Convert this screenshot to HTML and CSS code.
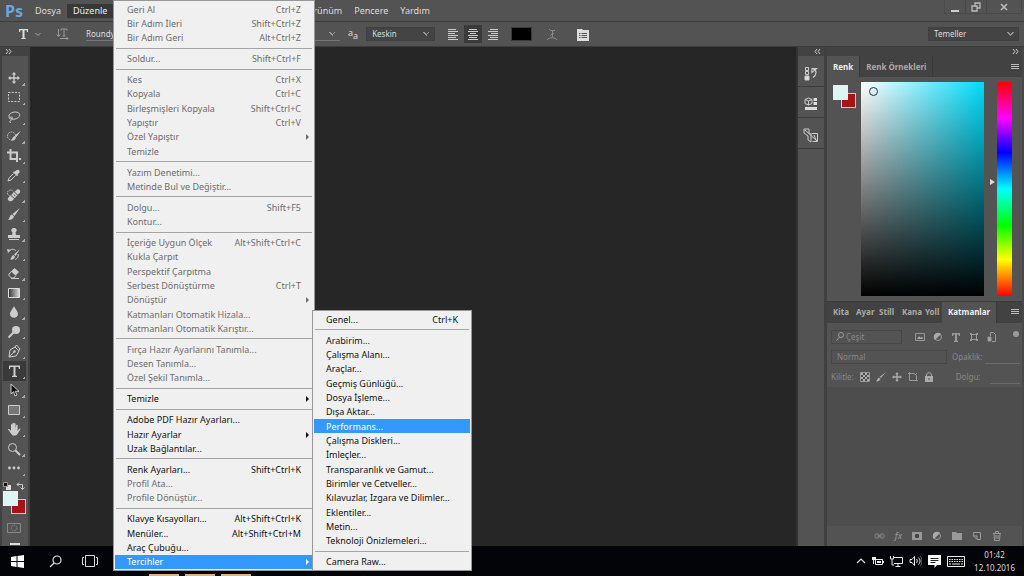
FILE: index.html
```html
<!DOCTYPE html>
<html lang="tr">
<head>
<meta charset="utf-8">
<title>Photoshop</title>
<link rel="stylesheet" href="styles.css">
</head>
<body>
<div class="app">
  <header class="titlebar">
    <span class="logo">Ps</span>
    <nav class="menubar">
      <button class="menu-btn">Dosya</button>
      <button class="menu-btn open">Düzenle</button>
    </nav>
    <nav class="menubar menubar-rest">
      <button class="menu-btn">Görünüm</button>
      <button class="menu-btn">Pencere</button>
      <button class="menu-btn">Yardım</button>
    </nav>
    <div class="window-controls">
      <button aria-label="Küçült"><svg width="10" height="10"><path d="M1 8h8v2H1z" fill="#ccc"/></svg></button>
      <button aria-label="Geri yükle"><svg width="10" height="10" fill="none" stroke="#bbb" stroke-width="1.3"><path d="M1 4h5v5H1zM4 3.500V1h5v5H6.500"/></svg></button>
      <button class="close" aria-label="Kapat"><svg width="10" height="10" stroke="#bbb" stroke-width="1.6"><path d="M2 2l6 6M8 2L2 8"/></svg></button>
    </div>
  </header>

  <div class="options">
    <button class="tool-preset" aria-label="Yazı aracı"><svg width="24" height="12" viewBox="0 0 24 12"><path d="M1 1h9v3H9L8.500 2.300H6.500V10l1.500.400V11H3v-.600L4.500 10V2.300h-2L2 4H1z" fill="#ddd"/><path d="M17.500 5l2.500 2.500L22.500 5" stroke="#aaa" fill="none"/></svg></button>
    <button class="orient" aria-label="Metin yönü"><svg width="13" height="12" viewBox="0 0 13 12" stroke="#999" fill="none"><path d="M2.500 1v7M.500 6.500l2 2 2-2M5 2.500V1h6v1.500M8 1v7M6.500 8h3M4 10.500h8M10.500 9l1.500 1.500-1.500 1.500"/></svg></button>
    <select class="font-select" aria-label="Yazı tipi"><option>Roundy</option></select>
    <select class="size-select" aria-label="Yazı boyutu"><option></option></select>
    <label class="aa" for="aa"><small>a</small><small class="low">a</small></label>
    <select id="aa" class="box aa-select"><option>Keskin</option></select>
    <div class="aligns">
      <button aria-label="Sola hizala"><svg width="12" height="12" stroke="#ccc"><path d="M1 1.500h8M1 3.500h10M1 5.500h7M1 7.500h10M1 9.500h8M1 11.500h10"/></svg></button>
      <button class="on" aria-label="Ortala"><svg width="12" height="12" stroke="#ccc"><path d="M2 1.500h8M1 3.500h10M3 5.500h6M1 7.500h10M2 9.500h8M1 11.500h10"/></svg></button>
      <button aria-label="Sağa hizala"><svg width="12" height="12" stroke="#ccc"><path d="M3 1.500h8M1 3.500h10M4 5.500h7M1 7.500h10M3 9.500h8M1 11.500h10"/></svg></button>
    </div>
    <button class="text-color" aria-label="Metin rengi"></button>
    <button class="warp" aria-label="Metni çarpıt"><svg width="12" height="13" viewBox="0 0 12 13" stroke="#888" fill="none"><path d="M3 1l1.500 1.500H9M6.500 2.500V9M4 7.500l4-2M1 12c1.500-3 8.500-3 10 0"/></svg></button>
    <button class="panel-toggle" aria-label="Karakter paneli"><svg width="14" height="13" viewBox="0 0 14 13"><path d="M1 1h5l1 1h6v11H1z" fill="#ddd"/><path d="M3 5.500h1.500M5.500 5.500H11M3 7.500h1.500M5.500 7.500H11M3 9.500h1.500M5.500 9.500H11" stroke="#555"/></svg></button>
    <select class="box workspace-select" aria-label="Çalışma alanı"><option>Temeller</option></select>
  </div>

  <main class="work">
    <aside class="toolbar">
      <div class="dock-head"><svg width="7" height="5" class="chev"><path d="M1 0l2 2.500L1 5M4 0l2 2.500L4 5"/></svg></div>
      <div class="tools">
        <button aria-label="Taşı"><svg viewBox="0 0 14 14"><path d="M7 1l2.300 2.500H7.700v2.800h2.800V4.700L13 7l-2.500 2.300V7.700H7.700v2.800h1.600L7 13l-2.300-2.500h1.600V7.700H3.500v1.600L1 7l2.500-2.300v1.600h2.800V3.500H4.700z" class="f"/></svg></button>
        <button aria-label="Seçim"><svg viewBox="0 0 14 14"><path d="M1.500 2.500h11v9h-11z" class="s" stroke-dasharray="2 1.300"/></svg></button>
        <button aria-label="Kement"><svg viewBox="0 0 14 14"><path d="M3.500 9.500C-1 5 5 1 10 2.200c5 1.300 2.500 7-3.500 7-2 0-3.500-1.500-3-2.200.800-1 2.500 1 1.500 2.500S2 10 3.500 13" class="s"/></svg></button>
        <button aria-label="Hızlı seçim"><svg viewBox="0 0 14 14"><circle cx="4.500" cy="7" r="4" class="s" stroke-dasharray="1.500 1"/><path d="M14 1.500L9.500 8 8 6.500zM7.500 7L9 8.700c-.500 2.500-3 3-5 2.800 1.500-1 1.500-4 3.500-4.500z" class="f"/></svg></button>
        <button aria-label="Kırp"><svg viewBox="0 0 14 14"><path d="M3.500 0v10H10M0 3.500h10V13M12 10h2" class="s w"/></svg></button>
        <button aria-label="Damlalık"><svg viewBox="0 0 14 14"><path d="M9 2.500c2-2 4.500 0 3.500 2l-2 2 .500.700-1 1-4-4 1-1 .700.500z" class="f"/><path d="M6.500 5.500L2 10l-1 3 3-1 4.500-4.500" class="s"/></svg></button>
        <button aria-label="İyileştirme"><svg viewBox="0 0 14 14"><circle cx="3.500" cy="5" r="3" class="s" stroke-dasharray="1.500 1"/><path d="M1 10l9-8.500c2-1 4 1.500 3 3L5 13C2.500 14 0 12 1 10z" class="f"/><path d="M4 7.500l4 3.500M7.500 4l3.500 3.500M7 6.500l1 1.500" stroke="#555"/></svg></button>
        <button aria-label="Fırça"><svg viewBox="0 0 14 14"><path d="M13 1L7.500 9 5.500 7zM5 7.500l2 2c-.500 2.500-3 3.500-6 3.500 2-1.500 1.500-5 4-5.500z" class="f"/></svg></button>
        <button aria-label="Klon damgası"><svg viewBox="0 0 14 14"><path d="M7 1c3 0 3.500 2.500 1.500 4.500L9 8h4v3H1V8h4l.500-2.500C3.500 3.500 4 1 7 1zM2 12h10v1H2z" class="f"/></svg></button>
        <button aria-label="Geçmiş fırçası"><svg viewBox="0 0 14 14"><path d="M13 2L8.500 9 7 7.500zM6.500 8L8 9.700C7.500 12 5 13 3 12.500c1.500-1 1.500-4 3.500-4.500zM0 2l4 1-3 3z" class="f"/><path d="M2 4c3-3 6-1.500 7 0M11 7c1 3-1 5-3 5.500" class="s"/></svg></button>
        <button aria-label="Silgi"><svg viewBox="0 0 14 14"><path d="M7.500 2L12 6l-3.500 3.500L4 5.500z" class="f"/><path d="M4 5.500L1.500 9l3 3H7l2-2.500M4 12.500h8" class="s"/></svg></button>
        <button aria-label="Degrade"><svg viewBox="0 0 14 14"><defs><linearGradient id="g"><stop stop-color="#333"/><stop offset="1" stop-color="#ddd"/></linearGradient></defs><path d="M1.500 2.500h11v9h-11z" fill="url(#g)" stroke="#ddd"/></svg></button>
        <button aria-label="Bulanıklaştır"><svg viewBox="0 0 14 14"><path d="M7 1c1 3 4 5 4 8 0 5-8 5-8 0 0-3 3-5 4-8z" class="f"/></svg></button>
        <button aria-label="Soldur"><svg viewBox="0 0 14 14"><circle cx="9" cy="5" r="4" class="f"/><path d="M6.500 7.500L1.500 12.500" class="s w"/></svg></button>
        <button aria-label="Kalem"><svg viewBox="0 0 14 14"><path d="M2 13l1-7 5-3 4 4-3 5-7 1zM2 13l5-5M8 3l1.500-2L13 5l-1.500 2" class="s"/><circle cx="7.500" cy="7.500" r="1.200" class="f"/></svg></button>
        <button class="on" aria-label="Yazı"><svg viewBox="0 0 14 14"><path d="M2 1.500h11v3.500h-1l-.500-2H8.500v8.500l1.500.500v1H5v-1l1.500-.500V3h-3L3 5H2z" class="f"/></svg></button>
        <button aria-label="Yol seçimi"><svg viewBox="0 0 14 14"><path d="M4 1v10l2.500-2.300L8 13l2-1-1.800-3.700H12z" fill="#111" stroke="#ccc"/></svg></button>
        <button aria-label="Dikdörtgen"><svg viewBox="0 0 14 14"><path d="M1.500 2.500h11v9h-11z" fill="#777" stroke="#ccc"/></svg></button>
        <button aria-label="El"><svg viewBox="0 0 14 14"><path d="M1 7.500c1-1 2 0 3 1.500V3c0-1.200 1.500-1.200 1.500 0v3.500V1.700c0-1.200 1.500-1.200 1.500 0v4.800V2c0-1.200 1.600-1.200 1.600 0v5l.5-3.500c.2-1.200 1.700-1 1.600.2L10.500 9l1.500-2c1-1 1.800-.3 1.300.6L10.500 12 9 13.500H5.500z" class="f"/></svg></button>
        <button aria-label="Yakınlaştır"><svg viewBox="0 0 14 14"><circle cx="5.500" cy="5.500" r="4" class="s"/><path d="M8.500 8.500L13 13" class="s w"/></svg></button>
        <button aria-label="Diğer araçlar"><svg viewBox="0 0 14 14"><circle cx="2.500" cy="7" r="1.400" class="f"/><circle cx="7" cy="7" r="1.400" class="f"/><circle cx="11.500" cy="7" r="1.400" class="f"/></svg></button>
      </div>
      <div class="tool-foot">
        <div class="mini"><svg width="8" height="8"><path d="M3 3h5v5H3z" fill="#ddd"/><path d="M.500.500h4v4h-4z" fill="#111" stroke="#999"/></svg><svg width="9" height="8" stroke="#ccc" fill="none"><path d="M3 .500L1 2.500l2 2M1 2.500h5.500V7M4.500 5.500l2 2 2-2"/></svg></div>
        <div class="swatches"><i class="bg"></i><i class="fg"></i></div>
        <button class="quick" aria-label="Hızlı maske"><svg width="14" height="10" fill="none" stroke="#888"><path d="M.500.500h13v9H.500z"/><circle cx="7" cy="5" r="2.800" stroke-dasharray="1.500 1"/></svg></button>
        <svg class="screen" width="10" height="3"><path d="M0 0h10v2H0z" fill="#ddd"/></svg>
      </div>
    </aside>

    <section class="canvas"></section>

    <aside class="strip">
      <div class="dock-head end"><svg width="7" height="5" class="chev"><path d="M3 0L1 2.500 3 5M6 0L4 2.500 6 5"/></svg></div>
      <button aria-label="Geçmiş"><svg width="14" height="15" viewBox="0 0 14 15" fill="none" stroke="#ccc"><path d="M1.500 1.500h3v3h-3zM1.500 5.500h3v3h-3z"/><path d="M1 10h4v4H1z" fill="#ddd"/><path d="M8 2.500h4.500L8 6.500zM9 3c4.500 1 3.500 6 0 8.500" stroke-width="1.200"/></svg></button>
      <button aria-label="Özellikler"><svg width="14" height="14" viewBox="0 0 14 14" fill="none" stroke="#ccc"><path d="M4.500 1L8 2.500v4L4.500 8 1 6.500v-4zM1 2.500L4.500 4 8 2.500M4.500 4v4"/><path d="M9.500 1H13v3H9.500zM9.500 5H13v3H9.500zM1 10h12v3H1z" fill="#ddd" stroke="none"/></svg></button>
      <button aria-label="Kitaplıklar"><svg width="16" height="15" viewBox="0 0 16 15" fill="none" stroke="#ccc"><path d="M1 1h5v4l2 1v8l-3-2V8L1 5zM2 2l12 11M8.500 5.500h6v8h-5M11 7l2 5"/></svg></button>
    </aside>

    <aside class="panels">
      <div class="dock-head end"><svg width="7" height="5" class="chev"><path d="M1 0l2 2.500L1 5M4 0l2 2.500L4 5"/></svg></div>
      <section class="panel">
        <div class="tabs">
          <button class="tab on">Renk</button><button class="tab wide">Renk Örnekleri</button>
          <svg class="burger" width="8" height="6" stroke="#bbb"><path d="M0 .500h8M0 2.500h8M0 4.500h8"/></svg>
        </div>
        <div class="color-body">
          <div class="swatches"><i class="bg"></i><i class="fg"></i></div>
          <div class="picker"><i class="picker-dot"></i></div>
          <div class="hue"><i class="hue-mark"></i></div>
        </div>
      </section>
      <section class="panel layers">
        <div class="tabs">
          <button class="tab short">Kita</button><button class="tab short">Ayar</button><button class="tab short">Still</button><button class="tab short">Kana</button><button class="tab short">Yoll</button><button class="tab on">Katmanlar</button>
          <svg class="burger" width="8" height="6" stroke="#bbb"><path d="M0 .500h8M0 2.500h8M0 4.500h8"/></svg>
        </div>
        <div class="row filter">
          <div class="search"><svg width="8" height="9" fill="none" stroke="#999"><circle cx="5" cy="3" r="2.500"/><path d="M3.500 5L.500 8.500"/></svg><select aria-label="Filtre"><option>Çeşit</option></select></div>
          <svg width="10" height="10" fill="none" stroke="#999"><path d="M.500 1.500h9v7h-9z"/><path d="M2 7l2-3 1.500 2L7 4.500 8 7z" fill="#aaa" stroke="none"/></svg>
          <svg width="10" height="10"><circle cx="5" cy="5" r="3.500" fill="#555" stroke="#999"/><path d="M8 2A4 4 0 0 0 2 8z" fill="#aaa"/></svg>
          <svg width="10" height="10"><path d="M1 1h8v3H8l-.500-1.500H6V8.500l1 .500v1H3V9l1-.500v-6H2.500L2 4H1z" fill="#999"/></svg>
          <svg width="10" height="10" fill="none" stroke="#999"><path d="M2.500 2.500h5v5h-5z"/><path d="M1 1h2v2H1zM7 1h2v2H7zM1 7h2v2H1zM7 7h2v2H7z" fill="#999" stroke="none"/></svg>
          <svg width="10" height="10" fill="none" stroke="#999"><path d="M3.500 4V.500h3l2 2v7H5"/><path d="M1 5h3v4H1z" fill="#aaa"/></svg>
          <svg class="switch" width="8" height="12"><circle cx="4" cy="3" r="3" fill="#999"/></svg>
        </div>
        <div class="row">
          <select class="blend" aria-label="Karışım modu"><option>Normal</option></select>
          <label for="opacity">Opaklık:</label><input id="opacity" class="line">
        </div>
        <div class="row locks">
          <span class="lock-label">Kilitle:</span>
          <svg width="10" height="10"><path d="M.500.500h9v9h-9z" stroke="#999" fill="none"/><path d="M1 1h2v2H1zM5 1h2v2H5zM3 3h2v2H3zM7 3h2v2H7zM1 5h2v2H1zM5 5h2v2H5zM3 7h2v2H3zM7 7h2v2H7z" fill="#aaa"/></svg>
          <svg width="10" height="10"><path d="M10 0L5 6 3.500 5zM3 5.500L4.500 7C4 9 2 9.500 0 9.500c1.500-1 1-3.500 3-4z" fill="#aaa"/></svg>
          <svg width="10" height="10" viewBox="0 0 14 14"><path d="M7 0l2.500 3H8v3h3V4.500L14 7l-3 2.500V8H8v3h1.500L7 14l-2.500-3H6V8H3v1.500L0 7l3-2.500V6h3V3H4.500z" fill="#aaa"/></svg>
          <svg width="10" height="10" fill="none" stroke="#999"><path d="M0 1.500h6l2.500 2V9M1.500 0v8.500H10M7 3l2-2"/></svg>
          <svg width="10" height="10" fill="none" stroke="#aaa"><path d="M2.500 5V3c0-3 5-3 5 0v2"/><path d="M1 4h8v6H1z" fill="#aaa" stroke="none"/><path d="M5 6v2" stroke="#555"/></svg>
          <label for="fill">Dolgu:</label><input id="fill" class="line">
        </div>
        <div class="layer-list"></div>
        <div class="layer-foot">
          <svg width="11" height="10" fill="none" stroke="#888"><circle cx="3" cy="5" r="2.200"/><circle cx="8" cy="5" r="2.200"/><path d="M3 5h5"/></svg>
          <em>fx</em>
          <svg width="10" height="10"><path d="M0 1h10v8H0z" fill="#999"/><circle cx="5" cy="5" r="2.200" fill="#444"/></svg>
          <svg width="10" height="10"><circle cx="5" cy="5" r="3.500" fill="#555" stroke="#999"/><path d="M8 2A4 4 0 0 0 2 8z" fill="#aaa"/></svg>
          <svg width="10" height="10"><path d="M0 1h4l1 1h5v7H0z" fill="#999"/></svg>
          <svg width="10" height="10" fill="none" stroke="#999"><path d="M1.500 5V1.500h7v7H5V5H1.500L5 8.500"/></svg>
          <svg width="10" height="10" fill="none" stroke="#999"><path d="M1 2.500h8M3.500 2V.500h3V2M2 3l.500 6.500h5L8 3M4 4v4M6 4v4"/></svg>
        </div>
      </section>
    </aside>
  </main>

  <footer class="taskbar">
    <button class="start" aria-label="Başlat"><svg width="13" height="13" fill="#fff"><path d="M0 2l5.500-1v5H0zM6.500.900L13 0v6H6.500zM0 7h5.500v5L0 11zM6.500 7H13v6l-6.500-.900z"/></svg></button>
    <button aria-label="Ara"><svg width="13" height="13" fill="none" stroke="#ddd" stroke-width="1.200"><circle cx="8" cy="5" r="4"/><path d="M5 8L1 12"/></svg></button>
    <button aria-label="Görev görünümü"><svg width="16" height="12" fill="none" stroke="#ddd"><path d="M3.500.500h9v11h-9zM2 2.500H.500v7H2M14 2.500h1.500v7H14"/></svg></button>
    <div class="running"><i></i><i></i><i></i></div>
    <div class="tray">
      <svg width="10" height="10" fill="none" stroke="#ddd" stroke-width="1.200"><path d="M1 7l4-4 4 4"/></svg>
      <svg width="12" height="10" fill="none" stroke="#eee"><path d="M3.500 3.500h7v5h-7z"/><path d="M5 5h4v2H5zM11 5h1v2h-1zM0 1h4v3H2v4H1V4H0z" fill="#eee" stroke="none"/></svg>
      <svg width="13" height="12" fill="none" stroke="#eee"><path d="M4 2.500h8.500v6H4M8 9v2M5.500 11.500h5M.500 1v3h3V1M2 4v6h2"/></svg>
      <svg width="13" height="12" fill="none" stroke="#eee"><path d="M1 4.500h2l2.500-3v9L3 7.500H1zM7.500 4c1 1 1 3 0 4M9.500 2.500c2 2 2 5 0 7"/><path d="M11.500 1.500c2 2 2 7 0 9" stroke="#777"/></svg>
      <svg width="13" height="13"><path d="M0 0h13v10H9l-2.500 3V10H0z" fill="#fff"/><path d="M2.500 3.500h8M2.500 5.500h8M2.500 7.500h5" stroke="#222"/></svg>
      <svg width="18" height="11" fill="none" stroke="#eee"><path d="M.500.500h17v10H.500z"/><path d="M2 3.500h14M2 5.500h14" stroke-dasharray="1.500 1"/><path d="M2 8h2M5 8h8M14 8h2"/></svg>
      <div class="clock"><time>01:42</time><span>12.10.2016</span></div>
    </div>
  </footer>

  <div class="menu edit-menu" role="menu">
    <button disabled>Geri Al<kbd>Ctrl+Z</kbd></button>
    <button disabled>Bir Adım İleri<kbd>Shift+Ctrl+Z</kbd></button>
    <button disabled>Bir Adım Geri<kbd>Alt+Ctrl+Z</kbd></button>
    <hr>
    <button disabled>Soldur...<kbd>Shift+Ctrl+F</kbd></button>
    <hr>
    <button disabled>Kes<kbd>Ctrl+X</kbd></button>
    <button disabled>Kopyala<kbd>Ctrl+C</kbd></button>
    <button disabled>Birleşmişleri Kopyala<kbd>Shift+Ctrl+C</kbd></button>
    <button disabled>Yapıştır<kbd>Ctrl+V</kbd></button>
    <button disabled class="sub">Özel Yapıştır</button>
    <button disabled>Temizle</button>
    <hr>
    <button disabled>Yazım Denetimi...</button>
    <button disabled>Metinde Bul ve Değiştir...</button>
    <hr>
    <button disabled>Dolgu...<kbd>Shift+F5</kbd></button>
    <button disabled>Kontur...</button>
    <hr>
    <button disabled>İçeriğe Uygun Ölçek<kbd>Alt+Shift+Ctrl+C</kbd></button>
    <button disabled>Kukla Çarpıt</button>
    <button disabled>Perspektif Çarpıtma</button>
    <button disabled>Serbest Dönüştürme<kbd>Ctrl+T</kbd></button>
    <button disabled class="sub">Dönüştür</button>
    <button disabled>Katmanları Otomatik Hizala...</button>
    <button disabled>Katmanları Otomatik Karıştır...</button>
    <hr>
    <button disabled>Fırça Hazır Ayarlarını Tanımla...</button>
    <button disabled>Desen Tanımla...</button>
    <button disabled>Özel Şekil Tanımla...</button>
    <hr>
    <button class="sub">Temizle</button>
    <hr>
    <button>Adobe PDF Hazır Ayarları...</button>
    <button class="sub">Hazır Ayarlar</button>
    <button>Uzak Bağlantılar...</button>
    <hr>
    <button>Renk Ayarları...<kbd>Shift+Ctrl+K</kbd></button>
    <button disabled>Profil Ata...</button>
    <button disabled>Profile Dönüştür...</button>
    <hr>
    <button>Klavye Kısayolları...<kbd>Alt+Shift+Ctrl+K</kbd></button>
    <button>Menüler...<kbd>Alt+Shift+Ctrl+M</kbd></button>
    <button>Araç Çubuğu...</button>
    <button class="sub selected">Tercihler</button>
  </div>

  <div class="menu prefs-menu" role="menu">
    <button>Genel...<kbd>Ctrl+K</kbd></button>
    <hr>
    <button>Arabirim...</button>
    <button>Çalışma Alanı...</button>
    <button>Araçlar...</button>
    <button>Geçmiş Günlüğü...</button>
    <button>Dosya İşleme...</button>
    <button>Dışa Aktar...</button>
    <button class="selected">Performans...</button>
    <button>Çalışma Diskleri...</button>
    <button>İmleçler...</button>
    <button>Transparanlık ve Gamut...</button>
    <button>Birimler ve Cetveller...</button>
    <button>Kılavuzlar, Izgara ve Dilimler...</button>
    <button>Eklentiler...</button>
    <button>Metin...</button>
    <button>Teknoloji Önizlemeleri...</button>
    <hr>
    <button>Camera Raw...</button>
  </div>
</div>
</body>
</html>
```
FILE: styles.css
```css
* { box-sizing: border-box; }
body { margin: 0; }
button, select, input, label, kbd { font: inherit; color: inherit; }
button { border: 0; padding: 0; margin: 0; background: none; display: flex; align-items: center; justify-content: center; }
select, input { appearance: none; border: 0; border-radius: 0; padding: 0; margin: 0; background: none; outline: 0; min-width: 0; }
svg { display: block; flex: none; }
i { display: block; }

.app {
  position: relative;
  height: 100vh;
  display: flex;
  flex-direction: column;
  overflow: hidden;
  background: #535353;
  color: #ddd;
  font: 9px/12px "Noto Sans", "Open Sans", sans-serif;
}

/* title bar */
.titlebar { display: flex; align-items: center; height: 22px; flex: none; border-bottom: 1px solid #3c3c3c; padding-left: 5px; }
.logo { font: bold 16px/20px "Noto Sans", sans-serif; color: #6ea6dc; width: 24px; }
.menubar { display: flex; }
.menu-btn { height: 14px; padding: 0 6px; }
.menu-btn.open { background: #383838; color: #eee; }
.menubar-rest { margin-left: 182px; }
.window-controls { display: flex; margin-left: auto; align-self: flex-start; height: 14px; border: 1px solid #4a4a4a; border-top: 0; margin-right: 2px; }
.window-controls button { width: 21px; border-right: 1px solid #4a4a4a; }
.window-controls .close { width: 34px; border-right: 0; }

/* options bar */
.options { display: flex; align-items: center; height: 25px; flex: none; border-bottom: 1px solid #3c3c3c; padding-left: 18px; padding-right: 5px; }
.tool-preset { margin-right: 14px; }
.orient { margin-right: 17px; }
.font-select, .size-select { border-bottom: 1px solid #777; height: 14px; font-size: 8px; }
.font-select { width: 80px; }
select {
  background-image: linear-gradient(45deg, transparent 50%, #999 50%, #999 65%, transparent 65%), linear-gradient(-45deg, transparent 50%, #999 50%, #999 65%, transparent 65%);
  background-size: 4px 4px;
  background-repeat: no-repeat;
  background-position: right 7px center, right 4px center;
}
.size-select { width: 160px; margin-left: 14px; }
.aa { display: flex; margin: 0 8px 0 8px; }
.aa small { font-size: 9px; line-height: 10px; }
.aa .low { padding-top: 3px; }
.box { background-color: #444; border: 1px solid #3f3f3f; height: 14px; line-height: 12px; padding-left: 5px; font-size: 8px; }
.aa-select { width: 69px; }
.aligns { display: flex; margin-left: 9px; gap: 2px; }
.aligns button { width: 18px; height: 18px; }
.aligns .on { background: #3a3a3a; }
.text-color { width: 21px; height: 14px; background: #000; border: 1px solid #3a3a3a; margin: 0 14px 0 9px; }
.warp { margin-right: 18px; }
.workspace-select { width: 91px; margin-left: auto; }

/* work area */
.work { display: flex; flex: 1; min-height: 0; }
.dock-head { display: flex; align-items: center; height: 9px; flex: none; background: #424242; padding: 0 3px; }
.dock-head.end { justify-content: flex-end; }
.chev { fill: none; stroke: #ccc; }
.toolbar { width: 30px; border-left: 2px solid #424242; border-right: 2px solid #424242; display: flex; flex-direction: column; }
.tools { flex: 1; display: flex; flex-direction: column; padding-top: 12px; min-height: 0; }
.tools button { flex: 1; margin: 0 2px 0 1px; padding-right: 2px; min-height: 0; background: linear-gradient(135deg, transparent 50%, #aaa 50%) no-repeat right 1px bottom 2px / 3px 3px; }
.tools svg { width: 14px; height: 14px; }
.tools .on { background-color: #3a3a3a; }
.f { fill: #ccc; }
.s { fill: none; stroke: #ccc; }
.w { stroke-width: 2; }
.tool-foot { height: 68px; flex: none; display: flex; flex-direction: column; align-items: flex-start; padding: 4px 0 0 1px; overflow: hidden; }
.mini { display: flex; gap: 5px; height: 11px; }
.swatches { display: grid; grid-template-columns: 8px 7px 8px; grid-template-rows: 8px 7px 8px; flex: none; }
.swatches .fg { grid-area: 1 / 1 / 3 / 3; background: #ddf5f3; border: 1px solid #eee; }
.swatches .bg { grid-area: 2 / 2 / 4 / 4; background: #a81416; border: 1px solid #ccc; }
.quick { margin: 9px 0 0 4px; }
.screen { margin: 10px 0 0 7px; }
.canvas { flex: 1; background: #262626; }

.strip { width: 31px; border-left: 2px solid #333; border-right: 3px solid #404040; display: flex; flex-direction: column; }
.strip button { height: 31px; border-bottom: 1px solid #3c3c3c; padding-top: 4px; }
.panels { width: 197px; display: flex; flex-direction: column; border-right: 2px solid #484848; }
.panel { flex: 1; display: flex; flex-direction: column; min-height: 0; }
.tabs { display: flex; align-items: stretch; height: 21px; flex: none; background: #424242; color: #aaa; font-size: 8px; font-weight: bold; }
.tab { padding: 0 6px; border-right: 1px solid #3a3a3a; }
.tab.on { background: #535353; color: #eee; }
.tab.short { width: 23px; padding: 0 0 0 6px; justify-content: flex-start; white-space: nowrap; border: 0; }
.burger { margin: auto 3px auto auto; }
.color-body { display: flex; flex: 1; padding: 5px 10px 5px 6px; min-height: 0; }
.color-body .swatches { align-self: flex-start; padding-top: 3px; }
.picker { flex: 1; margin: 0 13px 0 5px; background: linear-gradient(to bottom, transparent, #000), linear-gradient(to right, #fff, #00dcfa); padding: 5px 8px; }
.picker-dot { width: 9px; height: 9px; border: 1px solid #234; border-radius: 50%; }
.hue { width: 15px; display: flex; align-items: center; background: linear-gradient(to bottom, #f00, #f0f 17%, #00f 33%, #0ff 50%, #0f0 67%, #ff0 83%, #f00); }
.hue-mark { margin-left: -7px; margin-bottom: 14px; border: 3px solid transparent; border-left: 5px solid #ddd; border-right: 0; }

.layers { border-top: 1px solid #3c3c3c; }
.row { display: flex; align-items: center; height: 20px; flex: none; padding: 0 2px 0 4px; color: #888; font-size: 8px; }
.row select { height: 14px; border: 1px solid #474747; background-image: none; }
.filter { gap: 8px; margin-top: 4px; }
.search { display: flex; align-items: center; width: 71px; height: 14px; border: 1px solid #474747; padding-left: 4px; gap: 2px; margin-right: 5px; }
.search select { border: 0; flex: 1; height: 12px; }
.switch { margin-left: auto; }
.blend { width: 116px; padding-left: 5px; margin-right: 5px; }
.line { flex: 1; border-bottom: 1px solid #6a6a6a; height: 14px; margin-left: 3px; }
.locks { gap: 6px; }
.locks label { margin-left: 16px; }
.layer-list { flex: 1; background: #4d4d4d; }
.layer-foot { display: flex; align-items: center; gap: 10px; height: 20px; flex: none; justify-content: flex-end; padding-right: 20px; color: #999; }

/* task bar */
.taskbar { display: flex; align-items: center; height: 30px; flex: none; background: #020407; padding-left: 11px; }
.start { margin-right: 25px; }
.taskbar button + button + button { margin-left: 20px; }
.running { display: flex; gap: 6px; align-self: flex-end; margin-left: 51px; }
.running i { width: 30px; height: 2px; background: #e4b377; }
.tray { display: flex; align-items: center; gap: 6px; margin-left: auto; padding-right: 9px; }
.clock { display: flex; flex-direction: column; align-items: center; font-size: 8px; line-height: 13px; margin-left: 3px; }

/* pop-up menus */
.menu {
  position: absolute;
  bottom: 5px;
  display: flex;
  flex-direction: column;
  padding: 1px;
  border: 1px solid #979797;
  background: #f0f0f0;
  color: #111;
}
.menu button { flex: 2; min-height: 0; justify-content: flex-start; padding: 1px 12px 0; white-space: nowrap; line-height: 12px; }
.menu button:disabled { color: #6d6d6d; }
.menu kbd { margin-left: auto; }
.menu hr { flex: 1; min-height: 0; margin: 0 1px; border: 0; background: linear-gradient(#a5a5a5, #a5a5a5) no-repeat center / 100% 1px; }
.menu .sub { padding-right: 4px; }
.menu .sub::after { content: ""; margin-left: auto; border: 3px solid transparent; border-left: 3px solid currentColor; border-right: 0; }
.menu .selected { background: #3399ff; color: #fff; }
.edit-menu { top: 0; left: 113px; width: 202px; }
.prefs-menu { top: 310px; left: 312px; width: 160px; }
```
